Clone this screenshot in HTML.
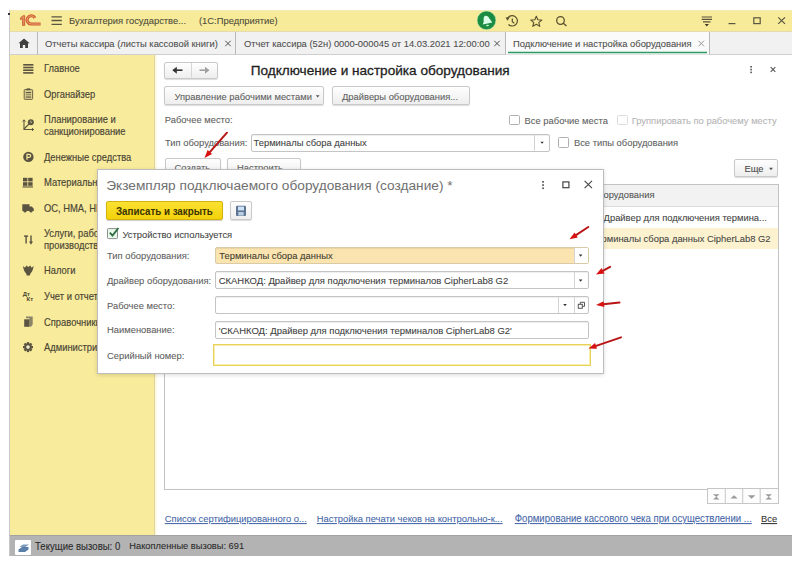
<!DOCTYPE html>
<html><head><meta charset="utf-8">
<style>
*{box-sizing:border-box;margin:0;padding:0}
html,body{width:800px;height:568px;overflow:hidden;background:#fff;font-family:"Liberation Sans",sans-serif;font-size:9.4px;color:#333;position:relative}
.a{position:absolute;white-space:nowrap;line-height:1}
svg{position:absolute;overflow:visible}
.tt{position:absolute;white-space:nowrap;line-height:1;color:#4e4e4e}
.si{position:absolute;left:44px;white-space:nowrap;line-height:10.8px;color:#4b4636;transform:scaleY(1.1);transform-origin:0 0;-webkit-text-stroke:0.15px #4b4636}
.btn{position:absolute;border:1px solid #c9c9c9;border-radius:2px;background:linear-gradient(#fefefe,#eeeeee);box-shadow:0 1px 1px rgba(0,0,0,.14)}
.lbl{position:absolute;white-space:nowrap;line-height:1;color:#5e5e5e}
.fld{position:absolute;border:1px solid #c4c4c4;border-radius:2px;background:#fff;box-shadow:inset 0 1px 1px rgba(0,0,0,.07)}
.chk{position:absolute;width:11px;height:11px;border:1px solid #b0b0b0;border-radius:1.5px;background:#fff}
.T{transform:scaleY(1.05);transform-origin:0 8px;-webkit-text-stroke:0.08px currentColor}
.TR{transform:scaleY(1.05);transform-origin:0 8px;-webkit-text-stroke:0.08px currentColor}
.link{position:absolute;white-space:nowrap;line-height:1;color:#4566a8;text-decoration:underline}
</style></head><body>
<!-- window frame -->
<div class="a" style="left:10px;top:9.5px;width:782px;height:22px;background:linear-gradient(#f5ebb0,#f7ea98 3px)"></div>
<div class="a" style="left:10px;top:31.4px;width:782px;height:23.6px;background:#f1f1f1;border-top:1px solid #e4dcae;border-bottom:1px solid #cfcfcf"></div>
<div class="a" style="left:10px;top:55px;width:144px;height:480px;background:#f8eb9c"></div>
<div class="a" style="left:153.7px;top:55px;width:1.3px;height:480px;background:#dcd39e"></div>
<div class="a" style="left:155px;top:55px;width:3px;height:480px;background:linear-gradient(90deg,#fbf7d6,#ffffff)"></div>
<div class="a" style="left:10px;top:535px;width:782px;height:21px;background:#b3b3b3;border-top:1px solid #a2a2a2"></div>
<div class="a" style="left:9px;top:10px;width:1px;height:546px;background:#c8c8c8"></div>

<div class="a" style="left:8px;top:12.5px;width:2px;height:2px;background:#333"></div>
<!-- title bar -->
<svg style="left:0;top:0" width="800" height="40">
  <!-- 1C logo -->
  <path d="M20.6 17.7 L23.2 15.7 L24.7 15.7 L24.7 25.4 L22.6 25.4 L22.6 18.6 L20.6 19.6 Z" fill="#e69068" stroke="#c8592a" stroke-width="0.9" stroke-linejoin="round"/>
  <path d="M34.9 17.9 A4.15 4.1 0 1 0 31 24 L40.6 24" stroke="#cf5d2c" stroke-width="3.1" fill="none"/>
  <path d="M34.9 17.9 A4.15 4.1 0 1 0 31 24 L40.6 24" stroke="#f2a884" stroke-width="0.9" fill="none"/>
  <!-- hamburger -->
  <g stroke="#5a5540" stroke-width="1.3">
    <path d="M51.5 16.8H61.8M51.5 20.5H61.8M51.5 24.3H61.8"/>
  </g>
  <!-- green bell -->
  <circle cx="486.5" cy="20.3" r="9.4" fill="#1c8c42" stroke="#c8f0b8" stroke-width="0.6"/>
  <path d="M485.6 15.8 Q488.3 15.6 489.4 18.6 L492.3 22.5 L482.8 24.5 Q484.1 21.8 483.6 19 Q483.6 16 485.6 15.8 Z" fill="#dcffe9"/>
  <ellipse cx="487.5" cy="25.5" rx="1.5" ry="0.8" transform="rotate(-12 487.5 25.5)" fill="#b8f5d0"/>
  <!-- history -->
  <g fill="none" stroke="#58502e" stroke-width="1.2">
    <path d="M507.5 18.5 A5.2 5.2 0 1 1 508.5 24.5"/>
    <path d="M512.3 18.5 V21.8 L514.3 23.3"/>
  </g>
  <path d="M505.5 17.5 L509.8 17.2 L507.5 20.8 Z" fill="#58502e"/>
  <!-- star -->
  <path d="M536.3 16.2 L537.8 19.8 L541.8 20.1 L538.8 22.6 L539.8 26.4 L536.3 24.3 L532.8 26.4 L533.8 22.6 L530.8 20.1 L534.8 19.8 Z" fill="none" stroke="#58502e" stroke-width="1.1" stroke-linejoin="round"/>
  <!-- search -->
  <g fill="none" stroke="#58502e" stroke-width="1.3">
    <circle cx="560.5" cy="20.5" r="3.8"/>
    <path d="M563.3 23.3 L566.5 26"/>
  </g>
  <!-- filter -->
  <g stroke="#5a5540" stroke-width="1.2">
    <path d="M701.7 17H712M701.7 19.4H712M703 21.8H710.5"/>
  </g>
  <path d="M704.8 24 H708.8 L706.8 26.4 Z" fill="#3a3520"/>
  <!-- min max close -->
  <g fill="none" stroke="#5a5540" stroke-width="1.2">
    <path d="M728.5 23.6H735.4"/>
    <rect x="753.8" y="17.8" width="6.4" height="5.8"/>
    <path d="M778.2 17.4 L785 23.9 M785 17.4 L778.2 23.9"/>
  </g>
</svg>
<div class="a T" style="left:69px;top:16.4px;color:#4d4a3a;">Бухгалтерия государстве...</div>
<div class="a T" style="left:199px;top:16.4px;color:#4d4a3a;">(1С:Предприятие)</div>

<!-- tab bar -->
<svg style="left:0;top:0" width="800" height="60">
  <path d="M18.5 43.3 L24 38.5 L29.7 43.3 L28 43.3 L28 47.9 L25.2 47.9 L25.2 45 L22.8 45 L22.8 47.9 L20 47.9 L20 43.3 Z" fill="#404040"/>
  <path d="M37.5 32V54.5M235.5 32V54.5M505.5 32V54.5M709.5 32V54.5" stroke="#b8b8b8" stroke-width="1"/>
  <rect x="506" y="32" width="203" height="22.5" fill="#fafafa"/>
  <path d="M508 52.6H707" stroke="#2f9a63" stroke-width="1.5"/>
  <g stroke="#505050" stroke-width="1"><path d="M225.3 40.8L230.7 46.2M230.7 40.8L225.3 46.2M494.3 40.8L499.7 46.2M499.7 40.8L494.3 46.2"/></g>
  <g stroke="#9a9a9a" stroke-width="1"><path d="M698.5 40.8L704 46.3M704 40.8L698.5 46.3"/></g>
</svg>
<div class="tt T" style="left:45px;top:39.0px">Отчеты кассира (листы кассовой книги)</div>
<div class="tt T" style="left:244px;top:39.0px">Отчет кассира (52н) 0000-000045 от 14.03.2021 12:00:00</div>
<div class="tt T" style="left:513px;top:39.0px">Подключение и настройка оборудования</div>

<!-- sidebar -->
<svg style="left:0;top:0" width="160" height="540">
 <g fill="#5b5440">
  <!-- главное -->
  <rect x="23.2" y="64" width="10.2" height="1.6"/><rect x="23.2" y="66.7" width="10.2" height="1.6"/><rect x="23.2" y="69.4" width="10.2" height="1.6"/><rect x="23.2" y="72.1" width="10.2" height="1.6"/>
  <!-- органайзер clipboard -->
  <rect x="24.2" y="89.6" width="8.4" height="9.8" rx="0.8" fill="#d9cd8f" stroke="#6e6646" stroke-width="1"/>
  <rect x="26.6" y="88.4" width="3.6" height="1.8" fill="#5b5440"/>
  <rect x="25.8" y="92" width="5.2" height="1.1"/><rect x="25.8" y="94.2" width="5.2" height="1.1" opacity=".6"/><rect x="25.8" y="96.5" width="5.2" height="1.1"/>
  <!-- денежные -->
  <circle cx="28.4" cy="156.9" r="5.2"/>
 </g>
 <path d="M27 159.8V154.3H29.2A1.5 1.5 0 0 1 29.2 157.3H27" fill="none" stroke="#f8eb9c" stroke-width="1.2"/>
 <!-- планирование -->
 <g fill="none" stroke="#5b5440" stroke-width="1.1">
  <path d="M24 120V129.5H33.5"/><path d="M24 129 L29 124"/>
 </g>
 <circle cx="30.8" cy="122.2" r="3" fill="#5b5440"/><path d="M30.8 120.6V122.4H32" stroke="#e8dca8" stroke-width="0.7" fill="none"/>
 <path d="M22.6 121.5L24 119.8L25.4 121.5M32 128.2L33.6 129.5L32 130.8" fill="none" stroke="#5b5440" stroke-width="1"/>
 <g fill="#5b5440">
  <!-- материалы grid -->
  <rect x="23" y="177.8" width="4.4" height="3.6"/><rect x="28.2" y="177.8" width="4.4" height="3.6"/>
  <rect x="23" y="182.2" width="4.4" height="3.6"/><rect x="28.2" y="182.2" width="4.4" height="3.6"/>
  <rect x="22.5" y="186.4" width="10.5" height="1.1"/>
  <!-- truck -->
  <path d="M22.3 204.2H29.5V206.5H31.8L33.8 208.8V211H22.3Z"/>
  <circle cx="25" cy="211.2" r="1.4"/><circle cx="31" cy="211.2" r="1.4"/>
  <!-- услуги T↓ -->
  <rect x="24" y="235.5" width="4.2" height="1.3"/><rect x="25.4" y="235.5" width="1.4" height="8"/>
  <rect x="30.3" y="235.5" width="1.4" height="6.5"/><path d="M29 241.5H33L31 244.8Z"/>
  <!-- налоги eagle -->
  <path d="M23 266 Q23.5 271 26 273.2 L26.8 275.6 L29.8 275.6 L30.6 273.2 Q33.1 271 33.6 266 L31.6 267.8 L30.3 265.4 L28.3 267 L26.3 265.4 L25 267.8 Z"/>
  <!-- справочники -->
  <path d="M26 316.4H32.7V324.5L31 326.7H29.3V318.2H26Z" fill="#8a8468"/>
  <path d="M24.2 319.3H29.4V326.8H24.2Z"/>
  <!-- gear -->
  <circle cx="28" cy="347.1" r="3.8"/>
  <rect x="26.9" y="342.1" width="2.2" height="10"/><rect x="23" y="346" width="10" height="2.2"/>
  <rect x="26.9" y="342.1" width="2.2" height="10" transform="rotate(45 28 347.1)"/><rect x="26.9" y="342.1" width="2.2" height="10" transform="rotate(-45 28 347.1)"/>
 </g>
 <circle cx="28" cy="347.1" r="1.8" fill="#f3ecd0"/>
 <text x="22.8" y="295.8" font-family="Liberation Sans" font-size="6" font-weight="bold" fill="#4b4530">Дт</text>
 <text x="26.5" y="301" font-family="Liberation Sans" font-size="6" font-weight="bold" fill="#4b4530">Кт</text>
</svg>
<div class="si" style="top:63.3px">Главное</div>
<div class="si" style="top:89.2px">Органайзер</div>
<div class="si" style="top:114.0px">Планирование и<br>санкционирование</div>
<div class="si" style="top:152.0px">Денежные средства</div>
<div class="si" style="top:176.9px">Материальные запасы</div>
<div class="si" style="top:202.8px">ОС, НМА, НПА</div>
<div class="si" style="top:227.5px">Услуги, работы,<br>производство</div>
<div class="si" style="top:265.3px">Налоги</div>
<div class="si" style="top:290.9px">Учет и отчетность</div>
<div class="si" style="top:316.5px">Справочники</div>
<div class="si" style="top:341.9px">Администрирование</div>

<!-- main content -->
<div class="btn" style="left:164px;top:61.5px;width:53.5px;height:17px"></div>
<svg style="left:0;top:0" width="800" height="540">
 <path d="M191.5 63V77.5" stroke="#d6d6d6"/>
 <g stroke="#333" stroke-width="1.6" fill="none"><path d="M173.5 70.2H182.5"/></g>
 <path d="M172.3 70.2L176.8 66.7V73.7Z" fill="#333"/>
 <path d="M199.5 70.2H206" stroke="#a0a0a0" stroke-width="1.6"/><path d="M209.5 70.2L205 66.7V73.7Z" fill="#a0a0a0"/>
 <g fill="#555"><rect x="750.3" y="66" width="1.6" height="1.6"/><rect x="750.3" y="68.8" width="1.6" height="1.6"/><rect x="750.3" y="71.6" width="1.6" height="1.6"/></g>
 <path d="M770.7 67.2L775.3 71.8M775.3 67.2L770.7 71.8" stroke="#555" stroke-width="1.1"/>
</svg>
<div class="a" style="left:250.7px;top:63.7px;font-size:13.6px;color:#1e1e1e;-webkit-text-stroke:0.3px #1e1e1e">Подключение и настройка оборудования</div>

<div class="btn" style="left:164.2px;top:86.4px;width:160.3px;height:18.4px"></div>
<div class="lbl T" style="left:174.5px;top:91.5px">Управление рабочими местами</div>
<div class="btn" style="left:331.6px;top:86.4px;width:138.2px;height:18.4px"></div>
<div class="lbl T" style="left:342px;top:91.5px">Драйверы оборудования...</div>
<svg style="left:0;top:0" width="800" height="540">
 <path d="M315.8 95.2H319.6L317.7 97.4Z" fill="#555"/>
</svg>

<div class="lbl T" style="left:164.8px;top:115.3px">Рабочее место:</div>
<div class="chk" style="left:509.2px;top:114.8px;width:10.4px;height:10.6px"></div>
<div class="lbl T" style="left:524.6px;top:116px">Все рабочие места</div>
<div class="chk" style="left:617px;top:114.8px;width:10.5px;height:10.6px;border-color:#dcdcdc"></div>
<div class="lbl T" style="left:631.7px;top:116px;color:#b4b4b4">Группировать по рабочему месту</div>

<div class="lbl T" style="left:165px;top:137.9px">Тип оборудования:</div>
<div class="fld" style="left:250.5px;top:133.6px;width:299.6px;height:18px"></div>
<div class="lbl T" style="left:253.5px;top:137.9px;color:#404040">Терминалы сбора данных</div>
<svg style="left:0;top:0" width="800" height="540">
 <path d="M534.5 134.5V150.5" stroke="#d0d0d0"/>
 <path d="M540.4 141.8H543.8L542.1 143.8Z" fill="#333"/>
</svg>
<div class="chk" style="left:558px;top:136.7px;width:10.9px;height:10.9px"></div>
<div class="lbl T" style="left:573.9px;top:137.7px">Все типы оборудования</div>

<div class="btn" style="left:164.7px;top:158px;width:56px;height:18.5px"></div>
<div class="lbl T" style="left:174.5px;top:163.0px">Создать</div>
<div class="btn" style="left:227.4px;top:158.2px;width:73.4px;height:18.5px"></div>
<div class="lbl T" style="left:237px;top:163.0px">Настроить...</div>
<div class="btn" style="left:734.4px;top:158.5px;width:43.7px;height:18px"></div>
<div class="lbl T" style="left:744.4px;top:164.0px;color:#484848">Еще</div>
<svg style="left:0;top:0" width="800" height="540">
 <path d="M769 167.8H773L771 170.2Z" fill="#555"/>
</svg>

<!-- table -->
<div class="a" style="left:164.3px;top:184px;width:614.5px;height:305.5px;border:1px solid #c3c3c3;background:#fff"></div>
<div class="a" style="left:165.3px;top:185px;width:612.5px;height:21.5px;background:#f2f2f2;border-bottom:1px solid #dcdcdc"></div>
<div class="a" style="left:165.3px;top:227.6px;width:612.5px;height:21.2px;background:#fcf2cf"></div>
<div class="lbl TR" style="left:553px;top:190px;color:#555;width:93.8px;text-align:right">Драйвер оборудования</div>
<div class="lbl T" style="left:603.6px;top:212.6px;color:#444">Драйвер для подключения термина...</div>
<div class="lbl TR" style="left:570px;top:234.1px;color:#444;width:200.6px;text-align:right">Терминалы сбора данных CipherLab8 G2</div>
<div class="a" style="left:707.3px;top:488px;width:71.6px;height:16.4px;border:1px solid #c6c6c6;background:#fdfdfd"></div>
<svg style="left:0;top:0" width="800" height="540">
 <path d="M725.3 488.5V504M742.7 488.5V504M760.2 488.5V504" stroke="#c6c6c6"/>
 <g fill="#9a9a9a">
  <path d="M713 494.2H719.6L716.3 497Z M713 499.6H719.6L716.3 496.8Z"/>
  <path d="M730.4 498.6H737.7L734 495.2Z"/>
  <path d="M747.8 495.2H755.4L751.6 498.8Z"/>
  <path d="M765.4 494.2H772L768.7 497Z M765.4 499.6H772L768.7 496.8Z"/>
 </g>
</svg>

<!-- links -->
<div class="link T" style="left:164.8px;top:514.4px">Список сертифицированного о...</div>
<div class="link T" style="left:316.8px;top:514.4px">Настройка печати чеков на контрольно-к...</div>
<div class="link T" style="left:514.8px;top:514.4px;font-size:9.6px">Формирование кассового чека при осуществлении ...</div>
<div class="a T" style="left:761px;top:514.4px;color:#333;text-decoration:underline">Все</div>


<!-- dialog -->
<div class="a" style="left:96.6px;top:169.3px;width:507.4px;height:204.4px;background:#fff;border:1px solid #bdbdbd;box-shadow:0 1px 4px rgba(0,0,0,.15)"></div>
<div class="a" style="left:106.2px;top:179px;font-size:13.7px;color:#707070">Экземпляр подключаемого оборудования (создание) *</div>
<svg style="left:0;top:0" width="800" height="568">
 <g fill="#555"><rect x="542.2" y="181" width="1.7" height="1.7"/><rect x="542.2" y="184.2" width="1.7" height="1.7"/><rect x="542.2" y="187.4" width="1.7" height="1.7"/></g>
 <rect x="562.9" y="181.9" width="6" height="5.8" fill="none" stroke="#444" stroke-width="1.2"/>
 <path d="M584.6 180.9L592 188.2M592 180.9L584.6 188.2" stroke="#444" stroke-width="1.1"/>
</svg>
<div class="a" style="left:106.1px;top:201.2px;width:117.4px;height:19px;border:1px solid #d2b30c;border-radius:2px;background:linear-gradient(#fbe232,#f3d10a);box-shadow:0 1px 1px rgba(0,0,0,.2)"></div>
<div class="a" style="left:116.4px;top:205.6px;font-size:10.5px;font-weight:bold;color:#3b3300;transform:scaleX(.93);transform-origin:0 0">Записать и закрыть</div>
<div class="btn" style="left:230px;top:201px;width:21.6px;height:19.4px"></div>
<svg style="left:0;top:0" width="800" height="568">
 <rect x="236" y="205.8" width="10" height="10.3" rx="1" fill="#5d7493"/>
 <rect x="238" y="206.6" width="6" height="3.8" fill="#cfe3f7"/>
 <rect x="238.3" y="212" width="5.4" height="3.6" fill="#b9cde3"/>
 <!-- checkbox -->
 <rect x="107.5" y="228.6" width="10" height="10" rx="1" fill="#e9f9ea" stroke="#8d8d8d" stroke-width="1"/>
 <path d="M109.8 232.6L112.5 235.6L118.4 228" fill="none" stroke="#2d6b44" stroke-width="1.8"/>
</svg>
<div class="lbl T" style="left:122.5px;top:229.5px;color:#444">Устройство используется</div>

<div class="lbl T" style="left:107px;top:251.3px">Тип оборудования:</div>
<div class="lbl T" style="left:107px;top:275.8px">Драйвер оборудования:</div>
<div class="lbl T" style="left:107px;top:300.8px">Рабочее место:</div>
<div class="lbl T" style="left:107px;top:325.0px">Наименование:</div>
<div class="lbl T" style="left:107px;top:350.8px">Серийный номер:</div>

<div class="fld" style="left:215.4px;top:246.6px;width:373.2px;height:17.8px;background:linear-gradient(90deg,#fbe4af 0,#fbe4af 158px,#fbe4af 100%);border-color:#d9cba8"></div>
<div class="a" style="left:573.5px;top:247.6px;width:14.1px;height:15.8px;background:#fff;border-left:1px solid #d4d4d4"></div>
<div class="lbl T" style="left:219.3px;top:251.0px;color:#3d3a30">Терминалы сбора данных</div>

<div class="fld" style="left:215.4px;top:271.3px;width:373.2px;height:18px"></div>
<div class="a" style="left:573.5px;top:272.3px;width:1px;height:16px;background:#d4d4d4"></div>
<div class="lbl T" style="left:218.7px;top:275.9px;color:#404040;font-size:9.48px">СКАНКОД: Драйвер для подключения терминалов CipherLab8 G2</div>

<div class="fld" style="left:215.4px;top:296.3px;width:373.2px;height:17.7px"></div>
<div class="a" style="left:558.3px;top:297.3px;width:1px;height:15.7px;background:#d4d4d4"></div>
<div class="a" style="left:573.5px;top:297.3px;width:1px;height:15.7px;background:#d4d4d4"></div>

<div class="fld" style="left:215.4px;top:321.3px;width:373.2px;height:17.5px"></div>
<div class="lbl T" style="left:218.7px;top:325.6px;color:#404040;font-size:9.48px">'СКАНКОД: Драйвер для подключения терминалов CipherLab8 G2'</div>

<div class="a" style="left:213.1px;top:343.6px;width:378px;height:22px;border:1px solid #e6d25a;box-shadow:inset 0 0 0 1px #f8eeb0;background:#fff"></div>

<svg style="left:0;top:0" width="800" height="568">
 <path d="M578.8 254.6H582.4L580.6 256.8Z" fill="#333"/>
 <path d="M578.8 279.6H582.4L580.6 281.8Z" fill="#333"/>
 <path d="M563.2 304H566.8L565 306.2Z" fill="#333"/>
 <g fill="none" stroke="#555" stroke-width="1"><rect x="578.3" y="304.3" width="4" height="4"/><path d="M580.3 304.3V302.3H584.5V306.3H582.3"/></g>
</svg>

<!-- red arrows -->
<svg style="left:0;top:0" width="800" height="568">
 <path d="M227.0 132.7L207.8 154.4" stroke="#b81616" stroke-width="2" stroke-linecap="round" fill="none"/>
 <path d="M204.5 158.1L207.6 150.1L212.1 154.1Z" fill="#d81212"/>
 <path d="M588.3 227.0L573.7 236.6" stroke="#b81616" stroke-width="2" stroke-linecap="round" fill="none"/>
 <path d="M569.5 239.3L574.6 232.4L577.8 237.4Z" fill="#d81212"/>
 <path d="M610.1 266.9L600.4 272.2" stroke="#b81616" stroke-width="2" stroke-linecap="round" fill="none"/>
 <path d="M596.0 274.6L601.6 268.1L604.5 273.4Z" fill="#d81212"/>
 <path d="M619.5 302.5L601.0 304.5" stroke="#b81616" stroke-width="2" stroke-linecap="round" fill="none"/>
 <path d="M596.0 305.0L603.6 301.2L604.3 307.1Z" fill="#d81212"/>
 <path d="M621.0 337.4L593.2 346.9" stroke="#b81616" stroke-width="2" stroke-linecap="round" fill="none"/>
 <path d="M588.5 348.5L595.1 343.1L597.0 348.8Z" fill="#d81212"/>
</svg>

<!-- status bar -->
<div class="a" style="left:15px;top:539.5px;width:16px;height:15px;background:#fff;border-radius:1px"></div>
<svg style="left:0;top:0" width="800" height="568">
 <path d="M19.5 547L23 544.5H29L25.5 547Z" fill="#7d9cc0"/>
 <path d="M18.5 549.5L22 547H28.5L28.5 549.5L25 552H18.5Z" fill="#5a7fa8"/>
</svg>
<div class="a T" style="left:35px;top:541.8px;color:#2a2a2a;font-size:9.6px">Текущие вызовы: 0</div>
<div class="a T" style="left:129.3px;top:541.8px;color:#2a2a2a;font-size:9.3px">Накопленные вызовы: 691</div>
</body></html>
